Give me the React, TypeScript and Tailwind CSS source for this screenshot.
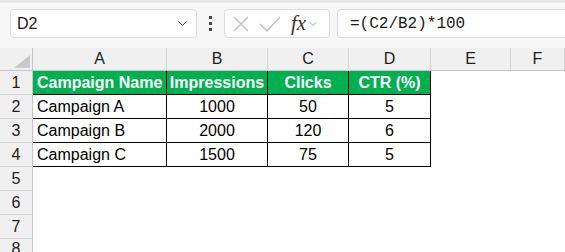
import { ChevronDown } from 'lucide-react'

const cols = ['A', 'B', 'C', 'D', 'E', 'F']
const widths = ['w-[134px]', 'w-[101px]', 'w-[81px]', 'w-[82px]', 'w-[80px]', 'flex-1']

const data = [
  ['Campaign A', '1000', '50', '5'],
  ['Campaign B', '2000', '120', '6'],
  ['Campaign C', '1500', '75', '5'],
]
const head = ['Campaign Name', 'Impressions', 'Clicks', 'CTR (%)']

function RowHead({ n, last }: { n: number; last?: boolean }) {
  return (
    <div
      className={[
        'flex w-[33px] shrink-0 justify-center border-r border-[#c6c6c6] bg-[#f0f0f0] text-[16px] text-[#222]',
        last ? 'h-[13px] items-start overflow-hidden pt-[1px] leading-[18px]' : 'h-[24px] items-center border-b border-b-[#d4d4d4]',
      ].join(' ')}
    >
      {n}
    </div>
  )
}

export default function App() {
  return (
    <div className="h-[252px] w-[565px] overflow-hidden bg-white font-['Liberation_Sans',Arial,sans-serif]">
      <div className="h-[3px] bg-[#e6e6e6] shadow-[0_1px_2px_rgba(0,0,0,0.12)]" />
      <div className="flex h-[45px] items-center bg-[#f7f7f7] pb-[4px] pl-[10px]">
        <div className="flex h-[29px] w-[187px] shrink-0 items-center justify-between rounded-[4px] border border-[#dcdcdc] bg-white pl-[6px] pr-[6px]">
          <span className="text-[16px] text-[#1a1a1a]">D2</span>
          <ChevronDown className="h-[15px] w-[15px] text-[#444]" strokeWidth={1.6} />
        </div>
        <div className="mx-[12px] flex w-[3px] shrink-0 flex-col items-center gap-[3px]">
          <span className="h-[3px] w-[3px] bg-[#444]" />
          <span className="h-[3px] w-[3px] bg-[#444]" />
          <span className="h-[3px] w-[3px] bg-[#444]" />
        </div>
        <div className="flex h-[29px] w-[106px] shrink-0 items-center rounded-[4px] border border-[#dcdcdc] bg-white pl-[8px]">
          <svg width="16" height="16" viewBox="0 0 16 16">
            <path d="M1 1 L15 15 M15 1 L1 15" stroke="#bdbdbd" strokeWidth="1.3" fill="none" />
          </svg>
          <svg className="ml-[10px]" width="22" height="16" viewBox="0 0 22 16">
            <path d="M1 8 L8 15 L21 1" stroke="#bdbdbd" strokeWidth="1.3" fill="none" />
          </svg>
          <span className="ml-[10px] font-['Liberation_Serif',serif] text-[21px] italic leading-none text-[#333]">fx</span>
          <ChevronDown className="ml-[1px] h-[12px] w-[12px] text-[#888]" strokeWidth={1.6} />
        </div>
        <div className="ml-[7px] flex h-[29px] flex-1 items-center rounded-l-[4px] border border-r-0 border-[#dcdcdc] bg-white pl-[12px]">
          <span className="font-['Liberation_Mono',monospace] text-[16px] text-[#1a1a1a]">=(C2/B2)*100</span>
        </div>
      </div>

      <div className="flex h-[23px] border-b border-[#c6c6c6] bg-[#f0f0f0]">
        <div className="relative w-[33px] shrink-0 border-r border-[#c6c6c6]">
          <svg className="absolute left-[14px] top-[7px]" width="16" height="13" viewBox="0 0 16 13">
            <polygon points="16,0 16,13 0,13" fill="#c9c9c9" />
          </svg>
        </div>
        {cols.map((c, i) => (
          <div
            key={c}
            className={`${widths[i]} flex shrink-0 items-center justify-center border-r border-[#d4d4d4] text-[16px] text-[#222]`}
          >
            {c}
          </div>
        ))}
      </div>

      <div className="flex h-[24px]">
        <RowHead n={1} />
        {head.map((h, i) => (
          <div
            key={h}
            className={`${widths[i]} flex shrink-0 items-center border-r border-b border-black bg-[#00b050] text-[16px] font-bold text-white ${i === 0 ? 'pl-[4px]' : 'justify-center'}`}
          >
            {h}
          </div>
        ))}
      </div>

      {data.map((row, r) => (
        <div key={r} className="flex h-[24px]">
          <RowHead n={r + 2} />
          {row.map((v, i) => (
            <div
              key={i}
              className={`${widths[i]} flex shrink-0 items-center border-r border-b border-black text-[16px] text-black ${i === 0 ? 'pl-[4px]' : 'justify-center'}`}
            >
              {v}
            </div>
          ))}
        </div>
      ))}

      {[5, 6, 7].map((n) => (
        <div key={n} className="flex h-[24px]">
          <RowHead n={n} />
        </div>
      ))}
      <div className="flex">
        <RowHead n={8} last />
      </div>
    </div>
  )
}
